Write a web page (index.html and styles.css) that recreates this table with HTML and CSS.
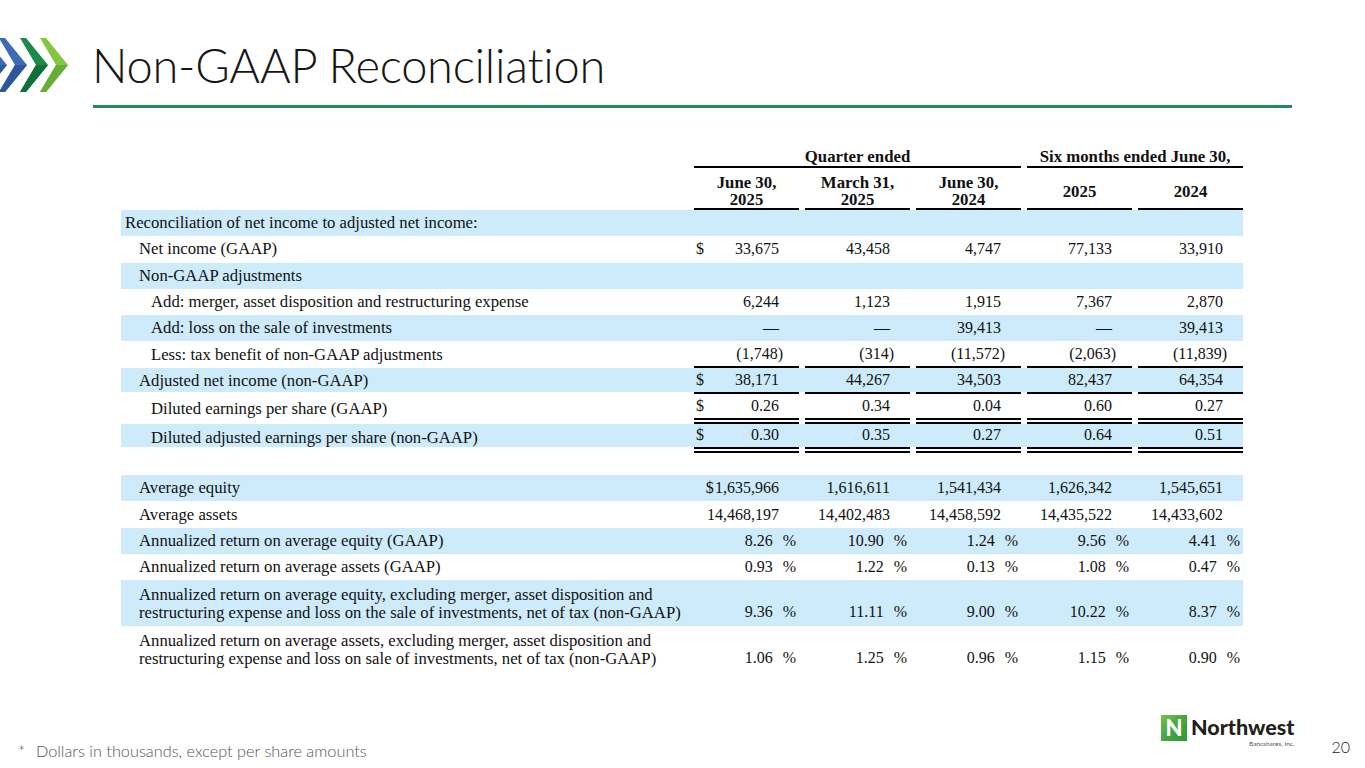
FILE: index.html
```html
<!DOCTYPE html>
<html lang="en">
<head>
<meta charset="utf-8">
<title>Non-GAAP Reconciliation</title>
<link rel="stylesheet" href="styles.css">
</head>
<body>
<div class="slide">
  <header class="head">
    <svg class="chev" width="70" height="56" viewBox="0 0 70 56" aria-hidden="true">
      <polygon points="-21,1 -15,1 7,28 -15,55 -21,55 -5,28" fill="#3d6cb4"/>
      <polygon points="-5,28 7,28 -15,55 -21,55" fill="#2d5799"/>
      <polygon points="-1,1 5,1 27,28 5,55 -1,55 15,28" fill="#3d6cb4"/>
      <polygon points="15,28 27,28 5,55 -1,55" fill="#2d5799"/>
      <polygon points="20,1 26,1 48,28 26,55 20,55 36,28" fill="#1b8a4b"/>
      <polygon points="36,28 48,28 26,55 20,55" fill="#106f3b"/>
      <polygon points="40,1 46,1 68,28 46,55 40,55 56,28" fill="#86c540"/>
      <polygon points="56,28 68,28 46,55 40,55" fill="#67ae39"/>
    </svg>
    <h1 class="title">Non-GAAP Reconciliation</h1>
  </header>
  <div class="rule"></div>

  <section class="table">
    <div class="row hrow1">
      <div></div>
      <div class="hc span3">Quarter ended</div>
      <div class="hc span2">Six months ended June 30,</div>
    </div>
    <div class="row hrow2">
      <div></div>
      <div class="hc">June 30,<br>2025</div>
      <div class="hc">March 31,<br>2025</div>
      <div class="hc">June 30,<br>2024</div>
      <div class="hc mid">2025</div>
      <div class="hc mid">2024</div>
    </div>

    <div class="row blue"><div class="lbl l0">Reconciliation of net income to adjusted net income:</div></div>
    <div class="row">
      <div class="lbl l1">Net income (GAAP)</div>
      <div class="v"><span class="d">$</span>33,675</div>
      <div class="v">43,458</div>
      <div class="v">4,747</div>
      <div class="v">77,133</div>
      <div class="v">33,910</div>
    </div>
    <div class="row blue"><div class="lbl l1">Non-GAAP adjustments</div></div>
    <div class="row">
      <div class="lbl l2">Add: merger, asset disposition and restructuring expense</div>
      <div class="v">6,244</div>
      <div class="v">1,123</div>
      <div class="v">1,915</div>
      <div class="v">7,367</div>
      <div class="v">2,870</div>
    </div>
    <div class="row blue">
      <div class="lbl l2">Add: loss on the sale of investments</div>
      <div class="v">—</div>
      <div class="v">—</div>
      <div class="v">39,413</div>
      <div class="v">—</div>
      <div class="v">39,413</div>
    </div>
    <div class="row ul">
      <div class="lbl l2">Less: tax benefit of non-GAAP adjustments</div>
      <div class="v">(1,748<span class="rp">)</span></div>
      <div class="v">(314<span class="rp">)</span></div>
      <div class="v">(11,572<span class="rp">)</span></div>
      <div class="v">(2,063<span class="rp">)</span></div>
      <div class="v">(11,839<span class="rp">)</span></div>
    </div>
    <div class="row blue ul">
      <div class="lbl l1">Adjusted net income (non-GAAP)</div>
      <div class="v"><span class="d">$</span>38,171</div>
      <div class="v">44,267</div>
      <div class="v">34,503</div>
      <div class="v">82,437</div>
      <div class="v">64,354</div>
    </div>
    <div class="row dbl">
      <div class="lbl l2">Diluted earnings per share (GAAP)</div>
      <div class="v"><span class="d">$</span>0.26</div>
      <div class="v">0.34</div>
      <div class="v">0.04</div>
      <div class="v">0.60</div>
      <div class="v">0.27</div>
    </div>
    <div class="row blue dbl">
      <div class="lbl l2">Diluted adjusted earnings per share (non-GAAP)</div>
      <div class="v"><span class="d">$</span>0.30</div>
      <div class="v">0.35</div>
      <div class="v">0.27</div>
      <div class="v">0.64</div>
      <div class="v">0.51</div>
    </div>
    <div class="row gap"></div>
    <div class="row blue">
      <div class="lbl l1">Average equity</div>
      <div class="v">$&#8202;1,635,966</div>
      <div class="v">1,616,611</div>
      <div class="v">1,541,434</div>
      <div class="v">1,626,342</div>
      <div class="v">1,545,651</div>
    </div>
    <div class="row">
      <div class="lbl l1">Average assets</div>
      <div class="v">14,468,197</div>
      <div class="v">14,402,483</div>
      <div class="v">14,458,592</div>
      <div class="v">14,435,522</div>
      <div class="v">14,433,602</div>
    </div>
    <div class="row blue">
      <div class="lbl l1">Annualized return on average equity (GAAP)</div>
      <div class="v p">8.26<span class="pc">%</span></div>
      <div class="v p">10.90<span class="pc">%</span></div>
      <div class="v p">1.24<span class="pc">%</span></div>
      <div class="v p">9.56<span class="pc">%</span></div>
      <div class="v p">4.41<span class="pc">%</span></div>
    </div>
    <div class="row">
      <div class="lbl l1">Annualized return on average assets (GAAP)</div>
      <div class="v p">0.93<span class="pc">%</span></div>
      <div class="v p">1.22<span class="pc">%</span></div>
      <div class="v p">0.13<span class="pc">%</span></div>
      <div class="v p">1.08<span class="pc">%</span></div>
      <div class="v p">0.47<span class="pc">%</span></div>
    </div>
    <div class="row blue two">
      <div class="lbl l1">Annualized return on average equity, excluding merger, asset disposition and<br>restructuring expense and loss on the sale of investments, net of tax (non-GAAP)</div>
      <div class="v p">9.36<span class="pc">%</span></div>
      <div class="v p">11.11<span class="pc">%</span></div>
      <div class="v p">9.00<span class="pc">%</span></div>
      <div class="v p">10.22<span class="pc">%</span></div>
      <div class="v p">8.37<span class="pc">%</span></div>
    </div>
    <div class="row two">
      <div class="lbl l1">Annualized return on average assets, excluding merger, asset disposition and<br>restructuring expense and loss on sale of investments, net of tax (non-GAAP)</div>
      <div class="v p">1.06<span class="pc">%</span></div>
      <div class="v p">1.25<span class="pc">%</span></div>
      <div class="v p">0.96<span class="pc">%</span></div>
      <div class="v p">1.15<span class="pc">%</span></div>
      <div class="v p">0.90<span class="pc">%</span></div>
    </div>
  </section>

  <footer class="foot">
    <p class="note"><span class="star">*</span>Dollars in thousands, except per share amounts</p>
    <div class="brand">
      <div class="nbox"><span>N</span></div>
      <div class="nw">
        <span class="nw-name">Northwest</span>
        <span class="nw-sub">Bancshares, Inc.</span>
      </div>
    </div>
    <span class="pageno">20</span>
  </footer>
</div>
</body>
</html>
```

FILE: styles.css
```css
* { box-sizing: border-box; margin: 0; padding: 0; }

html, body {
  width: 1365px;
  height: 768px;
  overflow: hidden;
  background: #fff;
}

body {
  font-family: "Liberation Serif", "Times New Roman", serif;
  color: #111;
}

.slide {
  width: 1365px;
  height: 768px;
  display: flex;
  flex-direction: column;
}

/* ---------- header ---------- */
.head {
  display: flex;
  align-items: center;
  padding-top: 36px;
  height: 94px;
}

.chev {
  flex: none;
  display: block;
}

.title {
  margin-left: 22px;
  font-family: "Lato", "Noto Sans", sans-serif;
  font-weight: 300;
  font-size: 47px;
  line-height: 56px;
  color: #161616;
  letter-spacing: -0.25px;
  font-variant-ligatures: none;
}

.rule {
  margin: 11px 0 0 93px;
  width: 1199px;
  height: 3px;
  background: #1f8a5b;
}

/* ---------- table ---------- */
.table {
  margin: 34px 0 0 121px;
  width: 1122px;
  font-size: 16px;
  line-height: 18px;
}

.row {
  display: grid;
  grid-template-columns: 567px repeat(5, 105px);
  column-gap: 6px;
  height: 26.3px;
}

.blue { background: #cdebfb; }

.hrow1 { height: 26px; }
.hrow2 { height: 42px; }

.hc {
  font-weight: bold;
  font-size: 16.8px;
  text-align: center;
  white-space: nowrap;
  border-bottom: 2px solid #000;
}
.hrow1 .hc { padding-top: 6px; }
.hrow2 .hc { padding-top: 6px; line-height: 17px; }
.hrow2 .hc.mid { padding-top: 15px; }

.span3 { grid-column: span 3; }
.span2 { grid-column: span 2; }

.lbl {
  display: flex;
  align-items: center;
  white-space: nowrap;
  font-size: 16.7px;
}
.l0 { padding-left: 4px; }
.l1 { padding-left: 18px; }
.l2 { padding-left: 30px; }

.v {
  display: flex;
  align-items: center;
  justify-content: flex-end;
  padding-right: 20px;
  white-space: nowrap;
}
.v .d {
  margin-right: auto;
  padding-left: 2px;
}
.rp { margin-right: -4px; }

.v.p { padding-right: 3px; }
.pc { margin-left: 10px; }

.ul .v { border-bottom: 2px solid #000; }
.blue.ul {
  background: linear-gradient(#cdebfb, #cdebfb) no-repeat top left / 100% calc(100% - 2px);
}

.dbl { height: 29.5px; }
.dbl .v { border-bottom: 6px double #000; }
.blue.dbl {
  background: linear-gradient(#cdebfb, #cdebfb) no-repeat top left / 100% calc(100% - 6px);
}

.gap { height: 22px; }

.two { height: 46px; }
.two .lbl { padding-top: 2px; }
.two .v { align-items: flex-end; padding-bottom: 5px; }

/* ---------- footer ---------- */
.foot {
  margin-top: auto;
  display: flex;
  align-items: flex-end;
  padding: 0 15px 8px 18px;
}

.note {
  font-family: "Lato", "Noto Sans", sans-serif;
  font-weight: 300;
  font-size: 16.3px;
  line-height: 18px;
  color: #555;
}
.star { margin-right: 11px; }

.brand {
  margin-left: auto;
  display: flex;
  align-items: flex-start;
  margin-bottom: 12px;
}

.nbox {
  width: 26px;
  height: 26px;
  background: linear-gradient(135deg, #7cc243 0%, #4ba93f 45%, #2f9440 100%);
  display: flex;
  align-items: center;
  justify-content: center;
}
.nbox span {
  font-family: "Lato", "Noto Sans", sans-serif;
  font-weight: 900;
  font-size: 22px;
  line-height: 1;
  color: #fff;
}

.nw {
  display: flex;
  flex-direction: column;
  align-items: flex-end;
  margin: -1px 0 0 4px;
}
.nw-name {
  font-family: "Lato", "Noto Sans", sans-serif;
  font-weight: 900;
  font-size: 21.5px;
  line-height: 26px;
  color: #231f20;
}
.nw-sub {
  font-family: "Lato", "Noto Sans", sans-serif;
  font-size: 6.5px;
  line-height: 8px;
  color: #555;
}

.pageno {
  margin-left: 37px;
  margin-bottom: 4px;
  font-family: "Lato", "Noto Sans", sans-serif;
  font-weight: 300;
  font-size: 16px;
  line-height: 18px;
  color: #222;
}
```
